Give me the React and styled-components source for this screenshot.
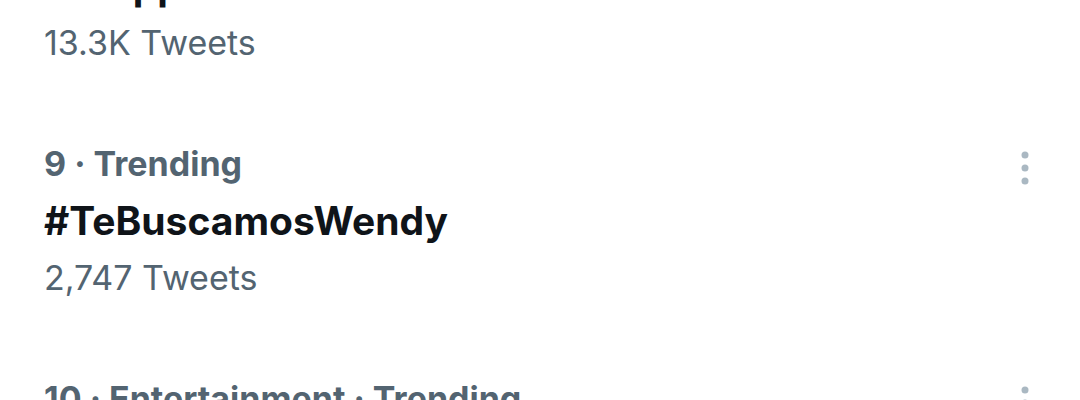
import React from "react";
import styled, { createGlobalStyle } from "styled-components";

const GlobalStyle = createGlobalStyle`
  html, body {
    margin: 0;
    padding: 0;
    background: #ffffff;
  }
  body {
    font-family: Inter, "Noto Sans", "Liberation Sans", sans-serif;
  }
`;

const trends = [
  { id: 8, category: "8 · Trending", name: "Whopper", tweets: "13.3K Tweets" },
  { id: 9, category: "9 · Trending", name: "#TeBuscamosWendy", tweets: "2,747 Tweets" },
  { id: 10, category: "10 · Entertainment · Trending", name: "Wednesday", tweets: "48.1K Tweets" },
];

const MoreIcon = () => (
  <svg width="8" height="34" viewBox="0 0 8 34" fill="#AAB8C2">
    <circle cx="4" cy="4" r="3.5" />
    <circle cx="4" cy="17" r="3.5" />
    <circle cx="4" cy="30" r="3.5" />
  </svg>
);

const App = () => {
  return (
    <Viewport>
      <GlobalStyle />
      <List>
        {trends.map((t) => (
          <Row key={t.id}>
            <Info>
              <Category>{t.category}</Category>
              <Title>{t.name}</Title>
              <Count>{t.tweets}</Count>
            </Info>
            <MoreButton>
              <MoreIcon />
            </MoreButton>
          </Row>
        ))}
      </List>
    </Viewport>
  );
};

export default App;

const Viewport = styled.div`
  width: 1080px;
  height: 400px;
  overflow: hidden;
  background: #ffffff;
`;

// list is scrolled, item 8 sits mostly above the fold
const List = styled.div`
  display: flex;
  flex-direction: column;
  margin-top: -131px;
`;

const Row = styled.div`
  display: flex;
  align-items: flex-start;
  padding: 32px 51px 33px 44px;
`;

const Info = styled.div`
  flex: 1;
  display: flex;
  flex-direction: column;
  min-width: 0;
`;

const Category = styled.div`
  font-size: 34px;
  line-height: 56px;
  font-weight: 700;
  color: #536471;
  white-space: nowrap;
`;

const Title = styled.div`
  font-size: 39px;
  line-height: 58px;
  font-weight: 700;
  color: #0f1419;
  white-space: nowrap;
`;

const Count = styled.div`
  font-size: 34px;
  line-height: 56px;
  font-weight: 400;
  color: #536471;
  white-space: nowrap;
`;

const MoreButton = styled.div`
  display: flex;
  margin-top: 15px;
  cursor: pointer;
`;
